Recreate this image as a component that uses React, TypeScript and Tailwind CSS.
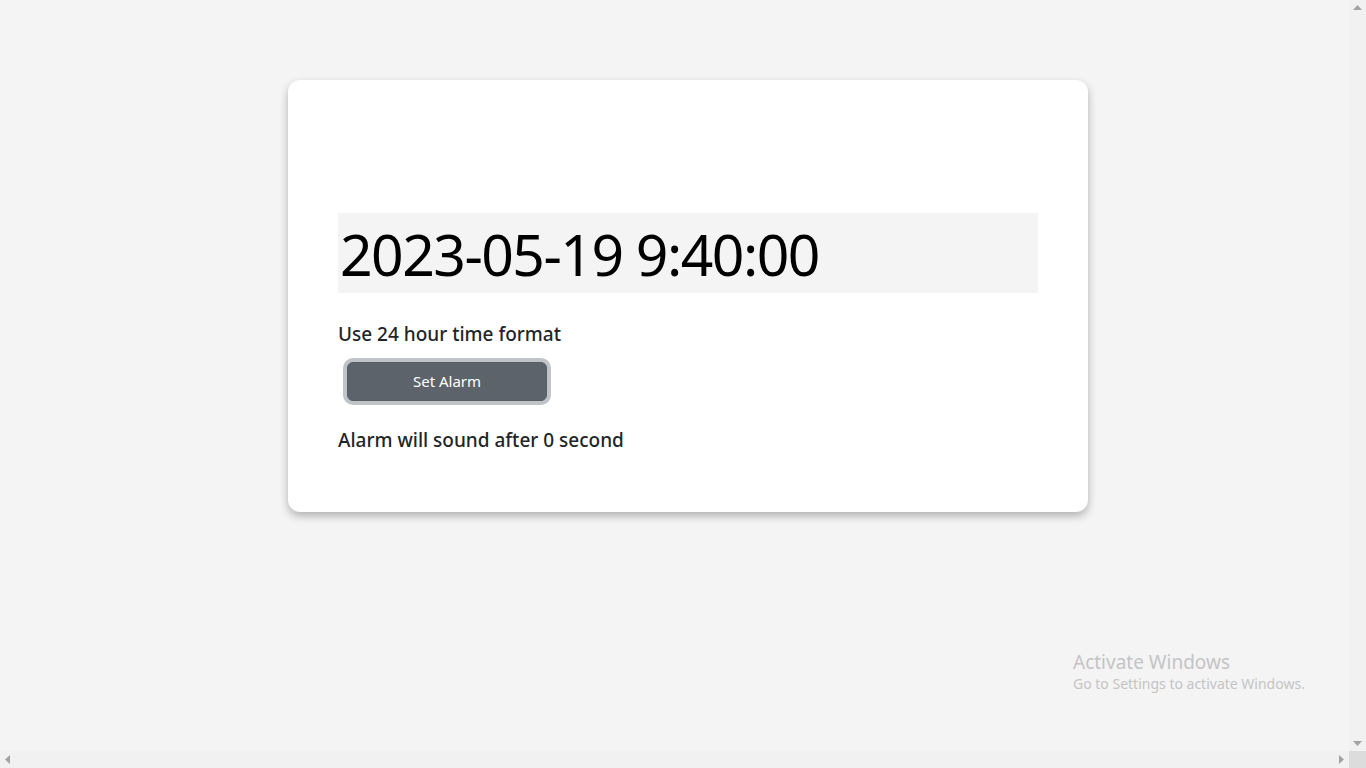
import React from "react";

export default function App() {
  const font = { fontFamily: '"Noto Sans", "Open Sans", sans-serif' };
  return (
    <div className="relative w-[1366px] h-[768px] overflow-hidden bg-[#f4f4f4]" style={font}>
      <div className="flex flex-col w-[1349px] h-[751px]">
        <div className="pl-[288px] pt-[80px]">
          <div className="w-[800px] h-[432px] rounded-[12px] bg-white shadow-[0_4px_8px_rgba(0,0,0,0.28)] px-[50px] pt-[133px]">
            <div className="h-[80px] bg-[#f4f4f4] flex items-center pl-[2px]">
              <span className="text-[57px] leading-none text-black tracking-[-1.5px] pt-[3px]">2023-05-19 9:40:00</span>
            </div>
            <div className="mt-[26px] text-[19px] leading-[30px] font-medium text-[#212529]">Use 24 hour time format</div>
            <div className="mt-[13px] ml-[9px]">
              <button className="w-[200px] h-[39px] rounded-[6px] bg-[#5c636a] border border-[#565e64] text-white text-[15px] shadow-[0_0_0_4px_rgba(130,138,145,0.5)]">
                Set Alarm
              </button>
            </div>
            <div className="mt-[24px] text-[19px] leading-[30px] font-medium text-[#212529]">Alarm will sound after 0 second</div>
          </div>
        </div>
      </div>
      {/* vertical scrollbar */}
      <div className="absolute top-0 right-0 w-[17px] h-[751px] bg-[#f1f1f1] flex flex-col items-center justify-between py-[5px]">
        <svg width="9" height="5" viewBox="0 0 9 5"><polygon points="0,5 9,5 4.5,0" fill="#a3a3a3" /></svg>
        <svg width="9" height="5" viewBox="0 0 9 5"><polygon points="0,0 9,0 4.5,5" fill="#a3a3a3" /></svg>
      </div>
      {/* horizontal scrollbar */}
      <div className="absolute bottom-0 left-0 w-[1349px] h-[17px] bg-[#f1f1f1] flex items-center justify-between px-[5px]">
        <svg width="5" height="9" viewBox="0 0 5 9"><polygon points="5,0 5,9 0,4.5" fill="#a3a3a3" /></svg>
        <svg width="5" height="9" viewBox="0 0 5 9"><polygon points="0,0 0,9 5,4.5" fill="#a3a3a3" /></svg>
      </div>
      <div className="absolute bottom-0 right-0 w-[17px] h-[17px] bg-[#dcdcdc]" />
      {/* watermark */}
      <div className="absolute left-[1073px] top-[650px] text-[#c4c4c4]">
        <div className="text-[19px] leading-[24px]">Activate Windows</div>
        <div className="text-[14px] leading-[20px]">Go to Settings to activate Windows.</div>
      </div>
    </div>
  );
}
